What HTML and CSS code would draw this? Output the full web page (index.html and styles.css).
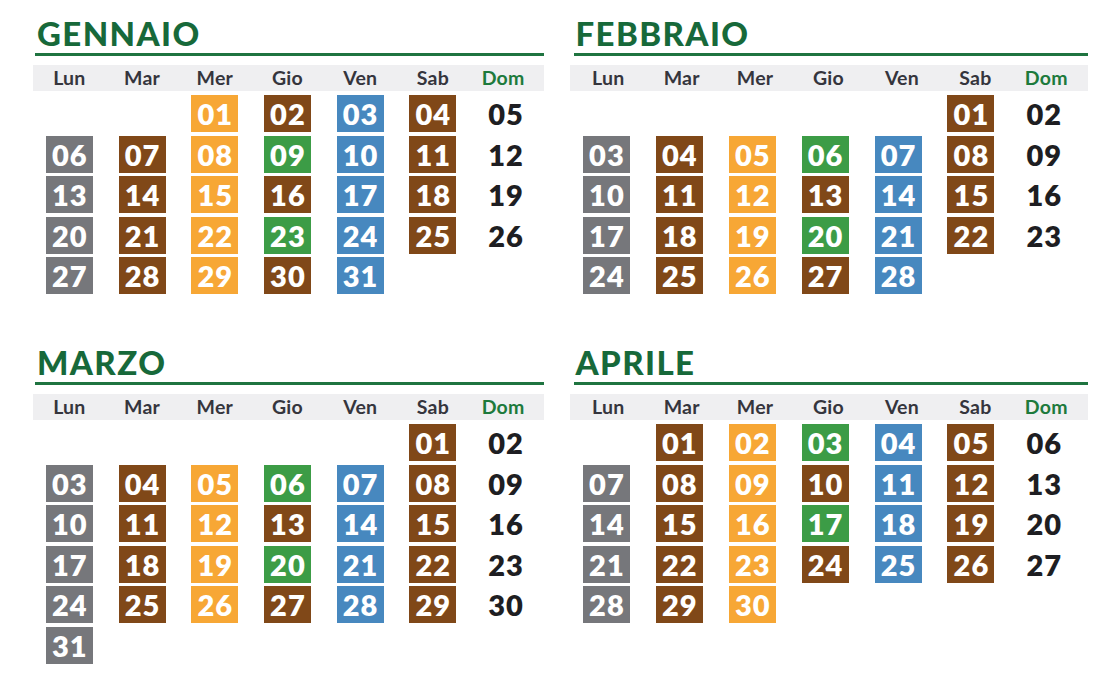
FILE: index.html
```html
<!DOCTYPE html>
<html lang="it">
<head>
<meta charset="utf-8">
<title>Calendario 2025</title>
<link rel="stylesheet" href="styles.css">
</head>
<body>
<main class="page">
  <section class="month">
    <h2 class="title">GENNAIO</h2>
    <div class="rule"></div>
    <div class="band"><span>Lun</span><span>Mar</span><span>Mer</span><span>Gio</span><span>Ven</span><span>Sab</span><span class="sun">Dom</span></div>
    <div class="days">
      <div class="d or c3">01</div><div class="d br">02</div><div class="d bl">03</div><div class="d br">04</div><div class="d plain">05</div>
      <div class="d gr">06</div><div class="d br">07</div><div class="d or">08</div><div class="d gn">09</div><div class="d bl">10</div><div class="d br">11</div><div class="d plain">12</div>
      <div class="d gr">13</div><div class="d br">14</div><div class="d or">15</div><div class="d br">16</div><div class="d bl">17</div><div class="d br">18</div><div class="d plain">19</div>
      <div class="d gr">20</div><div class="d br">21</div><div class="d or">22</div><div class="d gn">23</div><div class="d bl">24</div><div class="d br">25</div><div class="d plain">26</div>
      <div class="d gr">27</div><div class="d br">28</div><div class="d or">29</div><div class="d br">30</div><div class="d bl">31</div>
    </div>
  </section>
  <section class="month right">
    <h2 class="title">FEBBRAIO</h2>
    <div class="rule"></div>
    <div class="band"><span>Lun</span><span>Mar</span><span>Mer</span><span>Gio</span><span>Ven</span><span>Sab</span><span class="sun">Dom</span></div>
    <div class="days">
      <div class="d br c6">01</div><div class="d plain">02</div>
      <div class="d gr">03</div><div class="d br">04</div><div class="d or">05</div><div class="d gn">06</div><div class="d bl">07</div><div class="d br">08</div><div class="d plain">09</div>
      <div class="d gr">10</div><div class="d br">11</div><div class="d or">12</div><div class="d br">13</div><div class="d bl">14</div><div class="d br">15</div><div class="d plain">16</div>
      <div class="d gr">17</div><div class="d br">18</div><div class="d or">19</div><div class="d gn">20</div><div class="d bl">21</div><div class="d br">22</div><div class="d plain">23</div>
      <div class="d gr">24</div><div class="d br">25</div><div class="d or">26</div><div class="d br">27</div><div class="d bl">28</div>
    </div>
  </section>
  <section class="month">
    <h2 class="title">MARZO</h2>
    <div class="rule"></div>
    <div class="band"><span>Lun</span><span>Mar</span><span>Mer</span><span>Gio</span><span>Ven</span><span>Sab</span><span class="sun">Dom</span></div>
    <div class="days">
      <div class="d br c6">01</div><div class="d plain">02</div>
      <div class="d gr">03</div><div class="d br">04</div><div class="d or">05</div><div class="d gn">06</div><div class="d bl">07</div><div class="d br">08</div><div class="d plain">09</div>
      <div class="d gr">10</div><div class="d br">11</div><div class="d or">12</div><div class="d br">13</div><div class="d bl">14</div><div class="d br">15</div><div class="d plain">16</div>
      <div class="d gr">17</div><div class="d br">18</div><div class="d or">19</div><div class="d gn">20</div><div class="d bl">21</div><div class="d br">22</div><div class="d plain">23</div>
      <div class="d gr">24</div><div class="d br">25</div><div class="d or">26</div><div class="d br">27</div><div class="d bl">28</div><div class="d br">29</div><div class="d plain">30</div>
      <div class="d gr">31</div>
    </div>
  </section>
  <section class="month right">
    <h2 class="title">APRILE</h2>
    <div class="rule"></div>
    <div class="band"><span>Lun</span><span>Mar</span><span>Mer</span><span>Gio</span><span>Ven</span><span>Sab</span><span class="sun">Dom</span></div>
    <div class="days">
      <div class="d br c2">01</div><div class="d or">02</div><div class="d gn">03</div><div class="d bl">04</div><div class="d br">05</div><div class="d plain">06</div>
      <div class="d gr">07</div><div class="d br">08</div><div class="d or">09</div><div class="d br">10</div><div class="d bl">11</div><div class="d br">12</div><div class="d plain">13</div>
      <div class="d gr">14</div><div class="d br">15</div><div class="d or">16</div><div class="d gn">17</div><div class="d bl">18</div><div class="d br">19</div><div class="d plain">20</div>
      <div class="d gr">21</div><div class="d br">22</div><div class="d or">23</div><div class="d br">24</div><div class="d bl">25</div><div class="d br">26</div><div class="d plain">27</div>
      <div class="d gr">28</div><div class="d br">29</div><div class="d or">30</div>
    </div>
  </section>
</main>
</body>
</html>
```

FILE: styles.css
```css
* { box-sizing: border-box; }

html, body {
  margin: 0;
  padding: 0;
  background: #ffffff;
}

body {
  font-family: Lato, "Open Sans", "Liberation Sans", sans-serif;
  width: 1115px;
  height: 683px;
  overflow: hidden;
}

.page {
  display: grid;
  grid-template-columns: 509px 514px;
  grid-template-rows: 329px 329px;
  column-gap: 29.5px;
  padding: 17px 0 0 35px;
}

.month {
  display: flex;
  flex-direction: column;
}

.title {
  margin: 0;
  height: 33px;
  padding-left: 2px;
  font-size: 33px;
  line-height: 33px;
  font-weight: 900;
  letter-spacing: 1.4px;
  color: #17693a;
}

.rule {
  margin-top: 3px;
  height: 3px;
  background: #1f7440;
}

.band {
  margin-top: 9px;
  height: 26px;
  background: #efeff1;
  display: grid;
  grid-template-columns: repeat(7, 1fr);
  margin-left: -2px;
  padding-left: 2px;
}

.right .band {
  margin-left: -3.5px;
  padding-left: 3.5px;
}

.band span {
  text-align: center;
  font-size: 19.5px;
  line-height: 26px;
  font-weight: 700;
  letter-spacing: 0.2px;
  color: #35353d;
  margin-left: -4px;
}

.band .sun {
  color: #1d7a3c;
  margin-left: -9px;
}

.days {
  margin-top: 4px;
  margin-left: -2px;
  display: grid;
  grid-template-columns: repeat(7, 72.7px);
  grid-auto-rows: 37px;
  row-gap: 3.5px;
}

.right .days {
  margin-left: -3.5px;
  grid-template-columns: repeat(7, 72.9px);
}

.d {
  justify-self: center;
  width: 47px;
  height: 37px;
  text-align: center;
  font-size: 29px;
  line-height: 37px;
  font-weight: 800;
  letter-spacing: 1px;
  text-indent: 1px;
  color: #ffffff;
}

.c2 { grid-column-start: 2; }
.c3 { grid-column-start: 3; }
.c6 { grid-column-start: 6; }

.gr { background: #76777b; }
.br { background: #804818; }
.or { background: #f7a735; }
.gn { background: #3c9c46; }
.bl { background: #4788bf; }

.plain {
  color: #1e1e22;
  background: transparent;
}
```
